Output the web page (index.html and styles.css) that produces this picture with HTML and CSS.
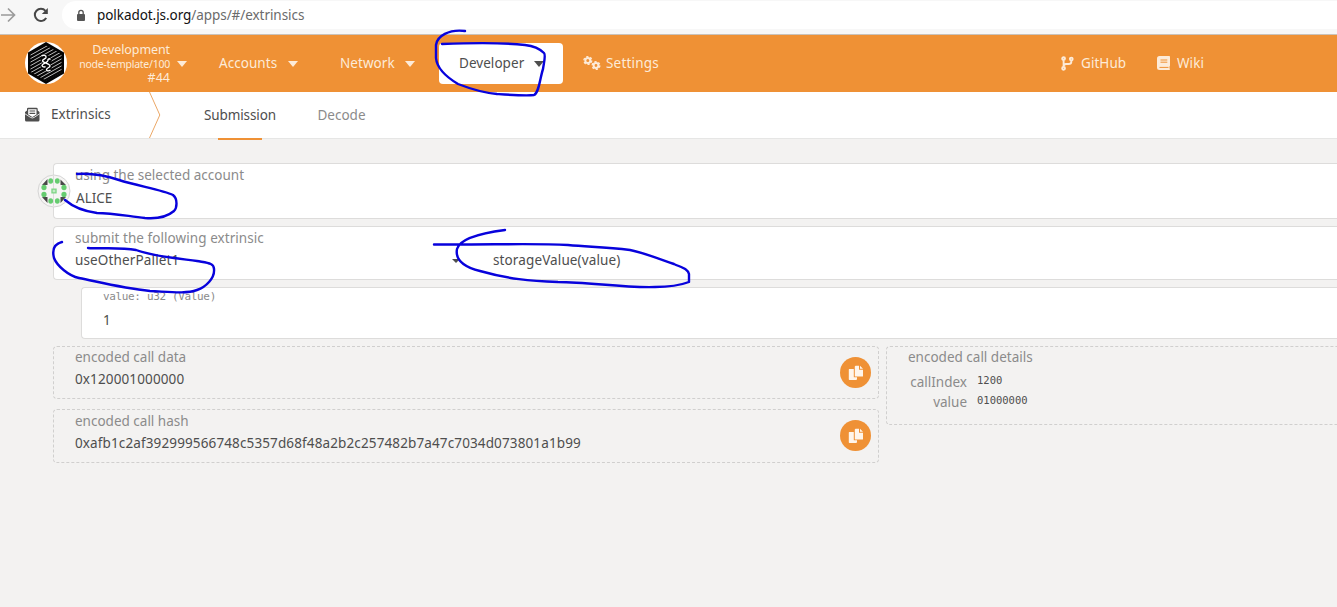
FILE: index.html
```html
<!DOCTYPE html>
<html lang="en">
<head>
<meta charset="utf-8">
<title>Extrinsics</title>
<link rel="stylesheet" href="styles.css">
</head>
<body>
<div class="browser-bar">
  <svg class="forward" width="18" height="18" viewBox="0 0 18 18" fill="none" stroke="#9b9b9b" stroke-width="1.7"><path d="M2 9H15M9 2.5L15.5 9L9 15.5"/></svg>
  <svg class="reload" width="18" height="18" viewBox="0 0 18 18"><path d="M14.2 12A6.1 6.1 0 1 1 13.5 4.8" fill="none" stroke="#474747" stroke-width="2"/><path d="M15.8 2V8H9.8Z" fill="#474747"/></svg>
  <div class="address">
    <svg width="10" height="13" viewBox="0 0 10 13"><rect x="1" y="5" width="8" height="7" rx="1" fill="#555"/><path d="M2.8 5.5V3.6a2.2 2.2 0 0 1 4.4 0V5.5" fill="none" stroke="#555" stroke-width="1.3"/></svg>
    <span class="host">polkadot.js.org</span><span class="path">/apps/#/extrinsics</span>
  </div>
</div>

<header class="topbar">
  <svg class="logo" width="42" height="42" viewBox="0 0 42 42">
    <defs><clipPath id="hex"><path d="M21 3.5L36.5 12V30L21 38.5L5.500 30V12Z"/></clipPath></defs>
    <circle cx="21" cy="21" r="21" fill="#fff"/>
    <path d="M21 0L39 10.500V31.500L21 42L3 31.500V10.500Z" fill="#050505"/>
    <g clip-path="url(#hex)" stroke="#d0d0d0" stroke-width=".9"><path d="M3 14.500L39-5.500M3 18L39-2M3 21.500L39 1.500M3 25L39 5M3 28.500L39 8.500M3 32L39 12M3 35.500L39 15.500M3 39L39 19M3 42.500L39 22.500M3 46L39 26M3 49.500L39 29.500"/></g>
    <path d="M18 12L25 14L27 19L24.500 21L27 25L25 30L17 27L15 23L17.500 21L15 17Z" fill="#050505"/>
    <path d="M16.500 14C18.500 12.500 21.500 13.500 21 15.500C20.500 17 17 17.500 17.500 19C18 21 25 21.500 25 24C25 25.500 21.500 26 21.500 27.500C21.500 29 23.500 29.500 25.500 28M25.500 17.500C24 16 22.500 17.500 23 18.500C23 20.500 17 21.500 17 23.500C17.500 25 19.500 25.500 20.500 24.500" fill="none" stroke="#fff" stroke-width="1.400"/>
  </svg>
  <div class="chain">
    <div class="t-dev">Development</div>
    <div class="chain-node">node-template/100</div>
    <div>#44</div>
  </div>
  <i class="caret chain-caret"></i>
  <nav class="menu">
    <div class="menu-item accounts"><span>Accounts</span><i class="caret"></i></div>
    <div class="menu-item network"><span>Network</span><i class="caret"></i></div>
    <div class="menu-item developer"><span>Developer</span><i class="caret"></i></div>
    <div class="menu-item settings">
      <svg width="18" height="16" viewBox="0 0 18 16" fill="none" stroke="#fdebd8"><circle cx="4.800" cy="5.500" r="2.500" stroke-width="2"/><circle cx="4.800" cy="5.500" r="3.900" stroke-width="1.400" stroke-dasharray="2.200 1.884"/><circle cx="13" cy="10.500" r="2.400" stroke-width="2"/><circle cx="13" cy="10.500" r="3.800" stroke-width="1.400" stroke-dasharray="2.100 1.879"/></svg>
      <span>Settings</span>
    </div>
  </nav>
  <div class="links">
    <div class="menu-item github">
      <svg width="13" height="15" viewBox="0 0 13 15" fill="none" stroke="#fdebd8" stroke-width="1.900"><circle cx="2.600" cy="2.600" r="1.400"/><circle cx="2.600" cy="12.300" r="1.400"/><circle cx="10.300" cy="3" r="1.400"/><path d="M2.600 4.500V10.500M10.300 4.500V6Q10.300 8 7.500 8H5Q2.600 8.200 2.600 10.500"/></svg>
      <span>GitHub</span>
    </div>
    <div class="menu-item wiki">
      <svg width="13" height="14" viewBox="0 0 13 14"><path d="M2.500 0H12.200Q13 0 13 .8V9.500Q13 10 12.500 10.400V12.400Q13 12.500 13 13Q13 14 12.200 14H2.500Q0 14 0 11.500V2.500Q0 0 2.500 0Z" fill="#fdebd8"/><path d="M3.500 4H10.300M3.500 6.200H10.300M2.500 11.400H11.500" stroke="#ef9135" stroke-width="1"/></svg>
      <span>Wiki</span>
    </div>
  </div>
</header>

<nav class="tabs">
  <svg class="envelope" width="15" height="15" viewBox="0 0 15 15"><path d="M2 3.500V2Q2 .8 3.200 .8H11.300Q12.700 .8 12.700 2V3.500L14.500 5V13Q14.500 14.500 13 14.500H1.500Q0 14.500 0 13V5Z" fill="#4e4e4e"/><path d="M3.200 2.200H11.500V7.500L7.400 10L3.200 7.500Z" fill="#fff"/><path d="M4.500 4H10.200M4.500 6.400H10.200" stroke="#4e4e4e" stroke-width="1.200"/><path d="M0 6.800L5.500 10.400Q7.300 11.600 9.200 10.400L14.500 6.800" fill="none" stroke="#fff" stroke-width=".8"/></svg>
  <span class="section">Extrinsics</span>
  <svg class="chevron" width="13" height="46" viewBox="0 0 13 46" fill="none" stroke="#eba766"><path d="M.5 0L10.800 23L.5 46"/></svg>
  <div class="tab submission"><span>Submission</span></div>
  <div class="tab decode"><span>Decode</span></div>
</nav>

<main class="content">
  <section class="card account">
    <div class="label">using the selected account</div>
    <div class="value">ALICE</div>
    <svg class="identicon" width="34" height="34" viewBox="0 0 34 34">
      <circle cx="17" cy="17" r="16" fill="#f6f5f4" stroke="#d5d5d5"/>
      <path d="M16.500 2V32" stroke="#ddd"/>
      <path d="M10.500 5V11H5ZM23.500 5.500L29 11H23.500ZM5 23H10.500V29ZM23.500 23H29L23.500 29Z" fill="#484848"/>
      <g fill="#66cc70"><ellipse cx="13.700" cy="7" rx="2.400" ry="2.800"/><ellipse cx="20.300" cy="7" rx="2.400" ry="2.800"/><ellipse cx="13.700" cy="27" rx="2.400" ry="2.800"/><ellipse cx="20.300" cy="27" rx="2.400" ry="2.800"/><ellipse cx="7" cy="13.500" rx="2.600" ry="2.700"/><ellipse cx="7" cy="20.500" rx="2.600" ry="2.700"/><ellipse cx="27" cy="13.500" rx="2.600" ry="2.700"/><ellipse cx="27" cy="20.500" rx="2.600" ry="2.700"/><rect x="14.300" y="14.500" width="5.400" height="5" fill="#83d68a"/></g>
      <path d="M15.500 17H18.500M17 15.700V18.300" stroke="#fff" stroke-width=".6"/>
    </svg>
  </section>
  <section class="card extrinsic">
    <div class="pallet">
      <div class="label l-extrinsic">submit the following extrinsic</div>
      <div class="value v-pallet">useOtherPallet1</div>
    </div>
    <i class="caret small"></i>
    <div class="value call">storageValue(value)</div>
  </section>
  <section class="card param">
    <div class="mono-label">value: u32 (Value)</div>
    <div class="value">1</div>
  </section>
  <div class="encoded">
    <div class="outputs">
      <section class="output">
        <div><div class="label">encoded call data</div><div class="value hex">0x120001000000</div></div>
        <div class="copy"><svg width="16" height="16" viewBox="0 0 16 16"><path d="M1.200 4H5.800V12.200H9V14Q9 15 8 15H1.500Q.8 15 .8 14.200V4.500Z" fill="#fff5ea"/><path d="M7.500 .8H11V4.800H15V11Q15 11.500 14.500 11.500H7.300Q6.800 11.500 6.800 11V1.500ZM12 .8L15 3.800H12Z" fill="#fff5ea"/></svg></div>
      </section>
      <section class="output hash">
        <div><div class="label">encoded call hash</div><div class="value hex">0xafb1c2af392999566748c5357d68f48a2b2c257482b7a47c7034d073801a1b99</div></div>
        <div class="copy"><svg width="16" height="16" viewBox="0 0 16 16"><path d="M1.200 4H5.800V12.200H9V14Q9 15 8 15H1.500Q.8 15 .8 14.200V4.500Z" fill="#fff5ea"/><path d="M7.500 .8H11V4.800H15V11Q15 11.500 14.500 11.500H7.300Q6.800 11.500 6.800 11V1.500ZM12 .8L15 3.800H12Z" fill="#fff5ea"/></svg></div>
      </section>
    </div>
    <section class="details">
      <div class="label">encoded call details</div>
      <dl>
        <dt>callIndex</dt><dd>1200</dd>
        <dt>value</dt><dd>01000000</dd>
      </dl>
    </section>
  </div>
</main>

<svg class="ink" width="1337" height="607" viewBox="0 0 1337 607">
  <path d="M465 31C449 29 437 36 436 45V58C437 70 448 78 458 84C476 91 486 93 497 94C512 95 526 96 534 95C539 93 540 78 543 69C544 62 546 55 544 53C540 49 534 46 525 45C499 42 469 43 442 44"/>
  <path d="M77 174C91 173 104 175 119 180C138 186 163 190 173 195C178 199 177 208 174 211C167 217 157 219 145 218C127 216 112 213 97 213C82 211 72 206 65 200"/>
  <path d="M62 242C54 244 52 250 54 258C57 266 69 276 79 278C99 282 122 288 150 291C171 292 186 294 197 290C206 287 215 278 214 269C214 263 208 263 197 261C174 258 152 256 136 250C120 247 102 249 88 248"/>
  <path d="M505 230C482 233 460 238 457 249C455 260 464 267 480 271C508 279 530 281 558 282C590 282 622 288 655 287C671 287 681 285 689 282V274C688 269 683 268 674 264C654 257 641 252 630 250C605 247 590 247 568 245C530 243 490 245 434 244.500"/>
</svg>
</body>
</html>
```
FILE: styles.css
```css
* { box-sizing: border-box; }

body {
  margin: 0;
  width: 1337px;
  height: 607px;
  overflow: hidden;
  position: relative;
  background: #f3f2f1;
  color: #4e4e4e;
  font: 13.5px/20px "Noto Sans", sans-serif;
}

svg { display: block; flex: none; }
span, .label, .value { white-space: nowrap; }

.browser-bar {
  display: flex;
  height: 35px;
  padding-top: 1px;
  background: #f7f7f7;
  border-bottom: 1px solid #c9c2ba;
}
.forward { margin: 5px 0 0 -1px; }
.reload { margin: 5px 0 0 15px; }
.address {
  display: flex;
  flex: 1;
  height: 28px;
  margin-left: 12px;
  padding: 0 0 0 14px;
  align-items: center;
  border-radius: 14px 0 0 14px;
  background: #fff;
  letter-spacing: -.06px;
}
.host { margin-left: 11px; color: #111; }
.path { color: #6b6b6b; }

.topbar {
  display: flex;
  align-items: center;
  height: 57px;
  padding-left: 25px;
  background: #ef9135;
  color: #fdebd8;
}
.logo { margin-top: -1px; }
.chain {
  width: 103px;
  text-align: right;
  font-size: 12.5px;
  line-height: 14px;
  white-space: nowrap;
}
.t-dev { letter-spacing: -.1px; }
.chain-node { font-size: 10.5px; letter-spacing: -.24px; }
.caret {
  flex: none;
  width: 0;
  height: 0;
  border: 5px solid transparent;
  border-top: 6px solid currentColor;
  border-bottom: 0;
}
.chain-caret { margin: 1px 0 0 7px; }
.menu { display: flex; }
.menu-item {
  display: flex;
  align-items: center;
  height: 41px;
}
.menu-item span { margin-top: -2px; letter-spacing: .05px; }
.menu-item .caret { margin-top: 1px; }
.menu-item svg { margin-top: -1px; }
.accounts { width: 121px; margin-left: 32px; }
.accounts span { width: 69px; }
.network { width: 99px; }
.network span { width: 65px; }
.developer {
  width: 124px;
  padding-left: 20px;
  border-radius: 4px;
  background: #fff;
  color: #4e4e4e;
}
.developer span { width: 75px; }
.settings { width: 100px; padding-left: 20px; }
.settings svg { margin-right: 5px; }
.settings span { letter-spacing: .2px; }
.links { display: flex; margin-left: 398px; }
.github { width: 96px; gap: 7px; }
.wiki { gap: 7px; }

.tabs {
  display: flex;
  height: 47px;
  padding-left: 25px;
  background: #fff;
  border-bottom: 1px solid #e6e6e5;
}
.envelope { margin-top: 15px; }
.section { width: 98px; margin: 12px 0 0 11px; }
.tab {
  display: flex;
  flex-direction: column;
  align-items: center;
  padding-top: 13px;
}
.submission { width: 72px; height: 48px; margin-left: 42px; letter-spacing: -.1px; }
.submission::after {
  content: "";
  flex: none;
  width: 44px;
  height: 2px;
  margin-top: 13px;
  background: #ef9135;
}
.decode { width: 49px; margin-left: 41px; color: #8b8b8b; }

.content { padding: 24px 0 0 53px; }
.card {
  background: #fff;
  border: 1px solid #dddcdb;
  border-right: 0;
  border-radius: 4px 0 0 4px;
}
.label { color: #8b8b8b; }
.account { position: relative; height: 56px; padding: 1px 0 0 21px; }
.account .value { margin: 3px 0 0 1px; }
.identicon { position: absolute; left: -17px; top: 10px; }
.extrinsic {
  display: flex;
  height: 54px;
  margin-top: 7px;
  padding: 1px 0 0 21px;
}
.pallet { width: 377px; }
.pallet .value { margin-top: 2px; }
.l-extrinsic { letter-spacing: .06px; }
.v-pallet { letter-spacing: .14px; }
.small { margin-top: 31px; border-width: 4px 4px 0; }
.call { margin: 22px 0 0 33px; letter-spacing: .12px; }
.param { height: 52px; margin: 7px 0 0 28px; padding: 1px 0 0 21px; }
.mono-label {
  color: #8b8b8b;
  font: 11px/16px "DejaVu Sans Mono", monospace;
  letter-spacing: -.35px;
}
.param .value { margin-top: 5px; }

.encoded { display: flex; gap: 7px; margin-top: 7px; }
.outputs { width: 826px; }
.output {
  display: flex;
  justify-content: space-between;
  height: 53px;
  padding: 0 7px 0 21px;
  border: 1px dashed #d0cfce;
  border-radius: 4px;
}
.hash { height: 54px; margin-top: 10px; }
.hash .label { margin-top: 1px; }
.output .value { margin-top: 2px; }
.hex { letter-spacing: .125px; }
.copy {
  display: flex;
  align-items: center;
  justify-content: center;
  width: 31px;
  height: 31px;
  margin-top: 10px;
  border-radius: 50%;
  background: #ef9135;
}
.details {
  flex: 1;
  height: 79px;
  padding-left: 21px;
  border: 1px dashed #d0cfce;
  border-right: 0;
  border-radius: 4px 0 0 4px;
}
dl {
  display: grid;
  grid-template-columns: 59px 1fr;
  column-gap: 10px;
  margin: 5px 0 0;
}
dt { text-align: right; color: #8b8b8b; }
dd {
  margin: 0;
  font: 10.5px/17px "DejaVu Sans Mono", monospace;
}

.ink {
  position: absolute;
  left: 0;
  top: 0;
  fill: none;
  stroke: #0802dc;
  stroke-width: 2.4;
  stroke-linecap: round;
  stroke-linejoin: round;
}
```
